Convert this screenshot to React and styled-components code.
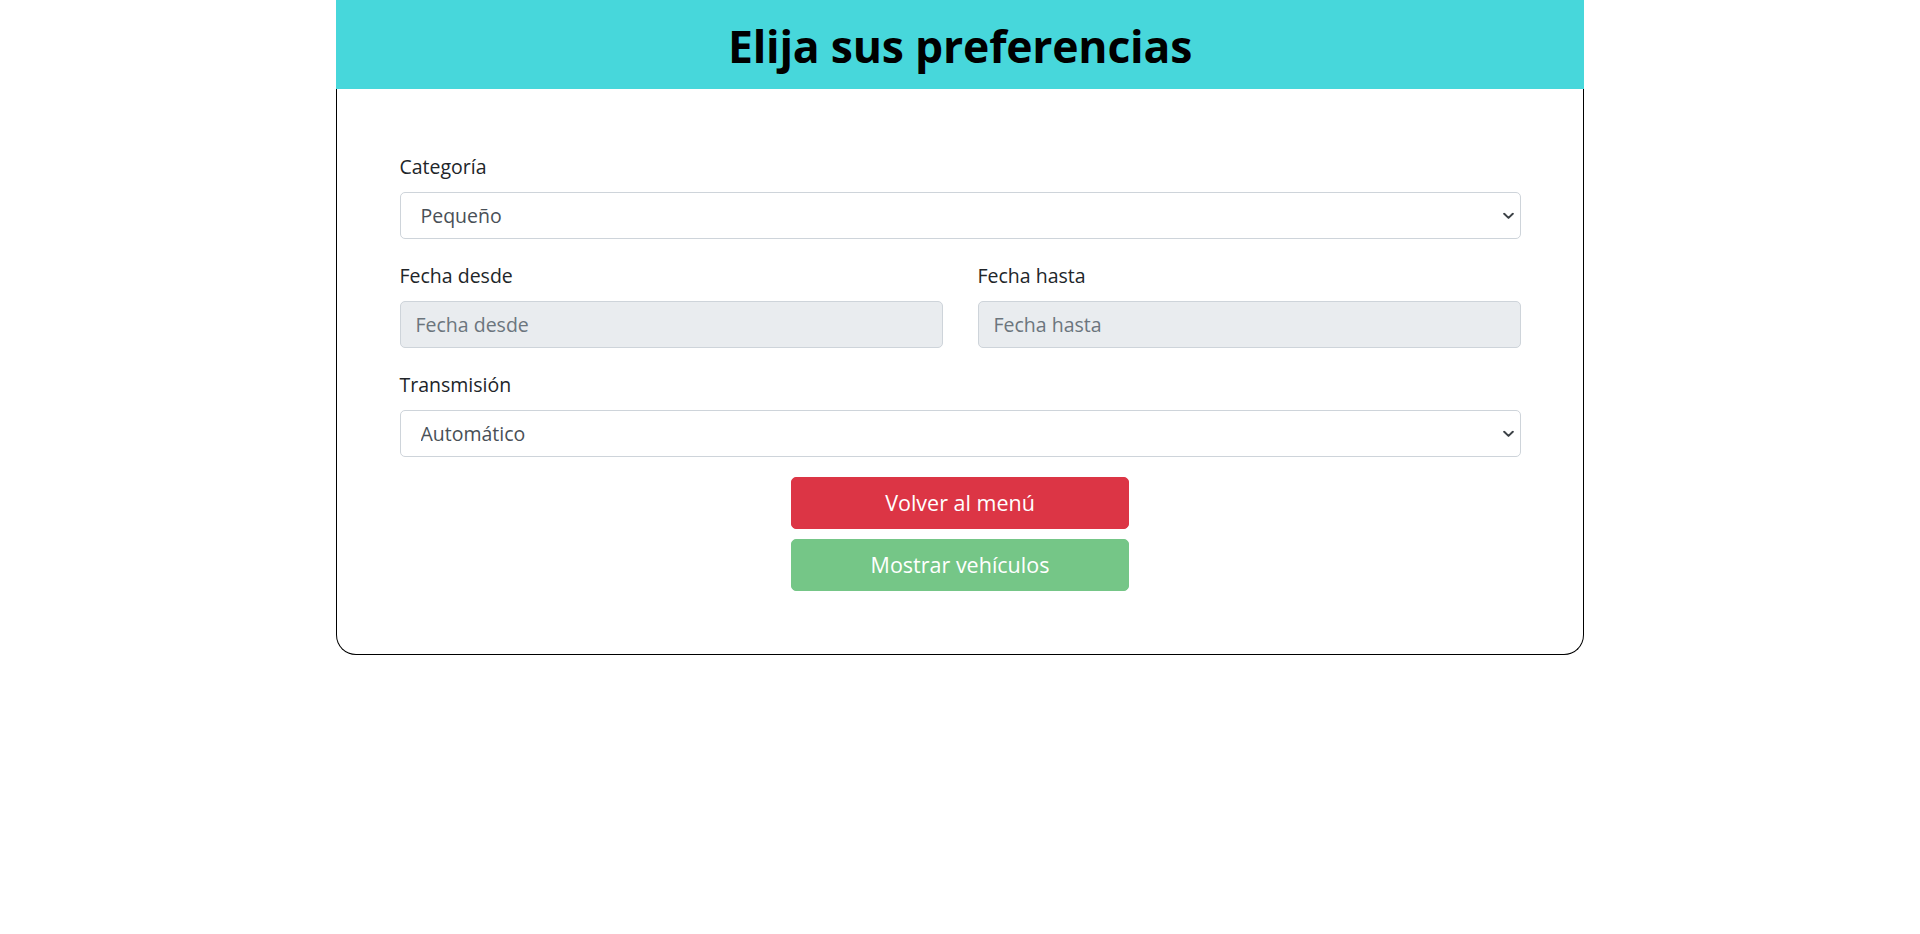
import React from "react";
import styled, { createGlobalStyle } from "styled-components";

const GlobalStyle = createGlobalStyle`
  html, body {
    margin: 0;
    padding: 0;
    background: #ffffff;
  }
  body {
    font-family: "Open Sans", "Noto Sans", Arial, sans-serif;
    color: #212529;
  }
  *, *::before, *::after { box-sizing: border-box; }
`;

const Card = styled.div`
  width: 1248px;
  margin: 0 auto;
`;

const Header = styled.header`
  height: 89px;
  background: #47d7db;
  display: flex;
  align-items: center;
  justify-content: center;
`;

const Title = styled.h2`
  margin: 0;
  font-family: "Open Sans", "Noto Sans", sans-serif;
  font-weight: 700;
  font-size: 44.5px;
  line-height: 52px;
  color: #000000;
  letter-spacing: -0.2px;
  padding-top: 2px;
`;

const Body = styled.form`
  border: 1px solid #000000;
  border-top: none;
  border-radius: 0 0 20px 20px;
  padding: 63px 62.5px 63px;
  display: flex;
  flex-direction: column;
  gap: 22px;
`;

const Row = styled.div`
  display: grid;
  grid-template-columns: 1fr 1fr;
  column-gap: 35px;
`;

const Group = styled.div`
  display: flex;
  flex-direction: column;
`;

const Label = styled.label`
  font-size: 19.5px;
  line-height: 30px;
  color: #212529;
  margin-bottom: 10px;
`;

const controlBase = `
  width: 100%;
  height: 47px;
  border: 1px solid #ced4da;
  border-radius: 5px;
  font-family: "Open Sans", "Noto Sans", sans-serif;
  font-size: 19.5px;
  line-height: 30px;
  outline: none;
  margin: 0;
`;

const SelectWrap = styled.div`
  position: relative;
`;

const Select = styled.select`
  ${controlBase}
  appearance: none;
  -webkit-appearance: none;
  background: #ffffff;
  color: #495057;
  padding: 0 36px 0 20px;
`;

const Chevron = styled.svg`
  position: absolute;
  right: 7px;
  top: 50%;
  width: 11px;
  height: 7px;
  transform: translateY(-50%);
  pointer-events: none;
`;

const Input = styled.input`
  ${controlBase}
  background: #e9ecef;
  color: #495057;
  padding: 0 15px;
  &::placeholder {
    color: #6c757d;
    opacity: 1;
  }
`;

const Actions = styled.div`
  display: flex;
  flex-direction: column;
  align-items: center;
  gap: 10px;
  margin-top: -2px;
`;

const Button = styled.button`
  width: 338px;
  height: 52px;
  border: 1px solid ${(p) => p.$bg};
  background: ${(p) => p.$bg};
  color: #ffffff;
  border-radius: 5px;
  font-family: "Open Sans", "Noto Sans", sans-serif;
  font-size: 21.5px;
  line-height: 30px;
  padding: 0 16px;
  cursor: ${(p) => (p.disabled ? "default" : "pointer")};
`;

function SelectField({ id, label, value, options }) {
  return (
    <Group>
      <Label htmlFor={id}>{label}</Label>
      <SelectWrap>
        <Select id={id} defaultValue={value}>
          {options.map((o) => (
            <option key={o} value={o}>
              {o}
            </option>
          ))}
        </Select>
        <Chevron viewBox="0 0 11 7" fill="none">
          <path
            d="M1.2 1.2 L5.5 5.4 L9.8 1.2"
            stroke="#3d4247"
            strokeWidth="2"
            strokeLinecap="round"
            strokeLinejoin="round"
          />
        </Chevron>
      </SelectWrap>
    </Group>
  );
}

function DateField({ id, label }) {
  return (
    <Group>
      <Label htmlFor={id}>{label}</Label>
      <Input id={id} type="text" placeholder={label} disabled />
    </Group>
  );
}

export default function App() {
  return (
    <>
      <GlobalStyle />
      <Card>
        <Header>
          <Title>Elija sus preferencias</Title>
        </Header>
        <Body onSubmit={(e) => e.preventDefault()}>
          <SelectField
            id="categoria"
            label="Categoría"
            value="Pequeño"
            options={["Pequeño", "Mediano", "Grande"]}
          />
          <Row>
            <DateField id="desde" label="Fecha desde" />
            <DateField id="hasta" label="Fecha hasta" />
          </Row>
          <SelectField
            id="transmision"
            label="Transmisión"
            value="Automático"
            options={["Automático", "Manual"]}
          />
          <Actions>
            <Button type="button" $bg="#dc3545">
              Volver al menú
            </Button>
            <Button type="button" $bg="#75c687" disabled>
              Mostrar vehículos
            </Button>
          </Actions>
        </Body>
      </Card>
    </>
  );
}
